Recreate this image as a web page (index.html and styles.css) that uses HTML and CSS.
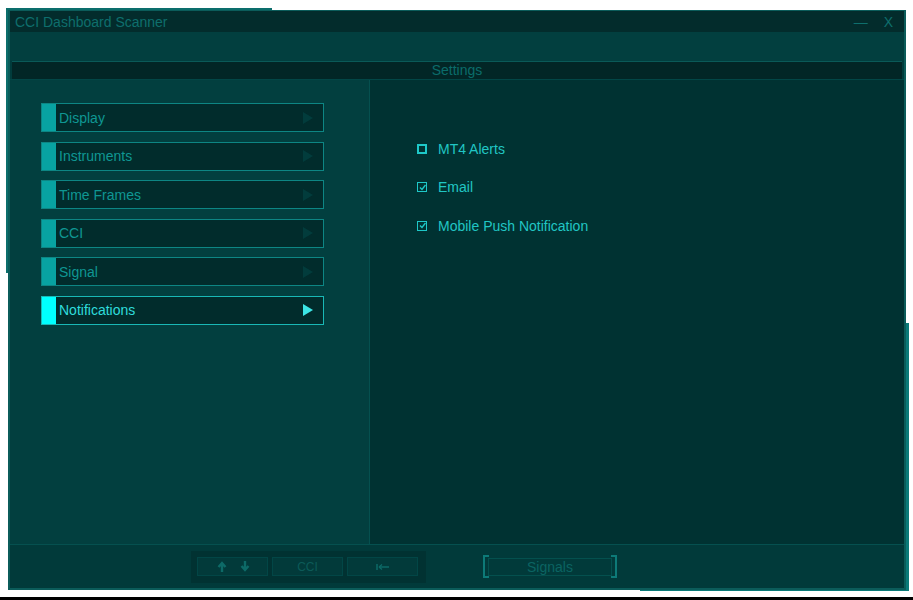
FILE: index.html
```html
<!DOCTYPE html>
<html>
<head>
<meta charset="utf-8">
<link rel="stylesheet" href="styles.css">
</head>
<body>
<div class="desktop">
  <div class="ghost ghost-a"></div>
  <div class="ghost ghost-b"></div>
  <div class="window">
    <div class="titlebar">
      <span class="title">CCI Dashboard Scanner</span>
      <span class="controls"><span class="min">—</span><span class="close">X</span></span>
    </div>
    <div class="toolbar"></div>
    <div class="section-head">Settings</div>
    <div class="main">
      <div class="nav">
        <div class="nav-item"><span class="accent"></span><span class="label">Display</span><span class="tri"></span></div>
        <div class="nav-item"><span class="accent"></span><span class="label">Instruments</span><span class="tri"></span></div>
        <div class="nav-item"><span class="accent"></span><span class="label">Time Frames</span><span class="tri"></span></div>
        <div class="nav-item"><span class="accent"></span><span class="label">CCI</span><span class="tri"></span></div>
        <div class="nav-item"><span class="accent"></span><span class="label">Signal</span><span class="tri"></span></div>
        <div class="nav-item active"><span class="accent"></span><span class="label">Notifications</span><span class="tri"></span></div>
      </div>
      <div class="content">
        <div class="opt"><span class="box"></span><span>MT4 Alerts</span></div>
        <div class="opt"><span class="box checked"><svg viewBox="0 0 7 7" width="7" height="7"><path d="M1 3.5 L3 5.5 L6.5 1" fill="none" stroke="#1ec8c8" stroke-width="1.4"/></svg></span><span>Email</span></div>
        <div class="opt"><span class="box checked"><svg viewBox="0 0 7 7" width="7" height="7"><path d="M1 3.5 L3 5.5 L6.5 1" fill="none" stroke="#1ec8c8" stroke-width="1.4"/></svg></span><span>Mobile Push Notification</span></div>
      </div>
    </div>
    <div class="footer">
      <div class="btn-group">
        <div class="fbtn">
          <svg width="36" height="13" viewBox="0 0 36 13"><path d="M7 12 V4.5 M3.5 7 L7 3 L10.5 7" fill="none" stroke="#0d6a67" stroke-width="2.4"/><path d="M30 1 V8.5 M26.5 6 L30 10 L33.5 6" fill="none" stroke="#0d6a67" stroke-width="2.4"/></svg>
        </div>
        <div class="fbtn">CCI</div>
        <div class="fbtn">
          <svg width="14" height="8" viewBox="0 0 14 8"><path d="M1 1 V7" stroke="#0d6a67" stroke-width="1.5"/><path d="M3 4 H13" stroke="#0d6a67" stroke-width="1.5"/><path d="M3 4 L6 1.5 M3 4 L6 6.5" stroke="#0d6a67" stroke-width="1.3"/></svg>
        </div>
      </div>
      <div class="signals"><span>Signals</span></div>
    </div>
  </div>
</div>
<div class="baseline"></div>
</body>
</html>
```
FILE: styles.css
```css
* { box-sizing: border-box; }
html, body { margin: 0; padding: 0; }
body {
  width: 913px;
  height: 600px;
  background: #ffffff;
  font-family: "Liberation Sans", Arial, sans-serif;
  font-size: 14px;
  overflow: hidden;
}
.desktop {
  position: relative;
  height: 597px;
}
.baseline {
  height: 3px;
  background: #000000;
}
.ghost {
  position: absolute;
  background: #0c6e6c;
}
.ghost-a { left: 6px; top: 8px; width: 266px; height: 265px; }
.ghost-b { left: 640px; top: 323px; width: 269px; height: 268px; background: #0a7a78; }
.window {
  position: absolute;
  left: 8px;
  top: 10px;
  width: 898px;
  height: 580px;
  background: #013c3c;
  border: 2px solid #0b5c5a;
  border-top-width: 1px;
  display: flex;
  flex-direction: column;
}
.titlebar {
  height: 21px;
  background: #032c2c;
  display: flex;
  align-items: center;
  justify-content: space-between;
  padding: 0 11px 0 5px;
  color: #0e6f6d;
  flex: none;
}
.title { font-size: 14px; }
.controls { display: flex; gap: 16px; font-size: 14px; }
.toolbar { height: 29px; background: #023f3f; flex: none; }
.section-head {
  height: 18px;
  margin: 0 2px 0 2px;
  background: #022626;
  border-top: 1px solid #0a5a58;
  color: #0b6c6a;
  text-align: center;
  line-height: 17px;
  font-size: 14px;
  flex: none;
}
.main {
  flex: 1;
  display: flex;
  border-top: 1px solid #024646;
}
.nav {
  width: 360px;
  background: #023f3f;
  border-right: 1px solid #05504f;
  padding: 23px 0 0 31px;
  display: flex;
  flex-direction: column;
  gap: 9.5px;
}
.nav-item {
  width: 283px;
  height: 29px;
  border: 1px solid #0d8684;
  background: #012c2c;
  display: flex;
  align-items: center;
  color: #0f9793;
}
.accent {
  width: 14px;
  height: 100%;
  background: #08a3a2;
  flex: none;
}
.label { flex: 1; padding-left: 3px; }
.tri {
  width: 0; height: 0;
  border-top: 6px solid transparent;
  border-bottom: 6px solid transparent;
  border-left: 10px solid #023c3c;
  margin-right: 10px;
}
.nav-item.active { color: #2fdcdc; border-color: #19b8b6; }
.nav-item.active .accent { background: #00ffff; }
.nav-item.active .tri { border-left-color: #3ce6e6; }
.content {
  flex: 1;
  background: #003232;
  padding: 59px 0 0 47px;
  display: flex;
  flex-direction: column;
  gap: 19.5px;
}
.opt {
  display: flex;
  align-items: center;
  gap: 11px;
  color: #20c6c4;
  height: 19px;
}
.box {
  width: 10px; height: 10px;
  border: 2px solid #1ec8c8;
  display: flex;
  align-items: center;
  justify-content: center;
}
.box.checked { border-width: 1.5px; }
.footer {
  height: 44px;
  border-top: 1px solid #05504f;
  background: #013a3a;
  display: flex;
  align-items: center;
  padding-left: 181px;
  flex: none;
}
.btn-group {
  width: 235px;
  height: 32px;
  background: #013232;
  display: flex;
  align-items: center;
  gap: 4px;
  padding: 0 6px;
}
.fbtn {
  width: 71px;
  height: 19px;
  border: 1px solid #024646;
  background: #023a3a;
  color: #0c5a58;
  font-size: 12px;
  display: flex;
  align-items: center;
  justify-content: center;
}
.signals {
  margin-left: 57px;
  width: 134px;
  height: 23px;
  position: relative;
  border: 2px solid #0d7a78;
  display: flex;
  align-items: center;
  justify-content: center;
  color: #0b6462;
}
.signals::before {
  content: "";
  position: absolute;
  left: 4px; right: 4px; top: -2px; bottom: -2px;
  border-top: 2px solid #013a3a;
  border-bottom: 2px solid #013a3a;
}
.signals span {
  position: relative;
  width: 124px;
  height: 18px;
  border: 1px solid #04504e;
  text-align: center;
  line-height: 17px;
}
```
